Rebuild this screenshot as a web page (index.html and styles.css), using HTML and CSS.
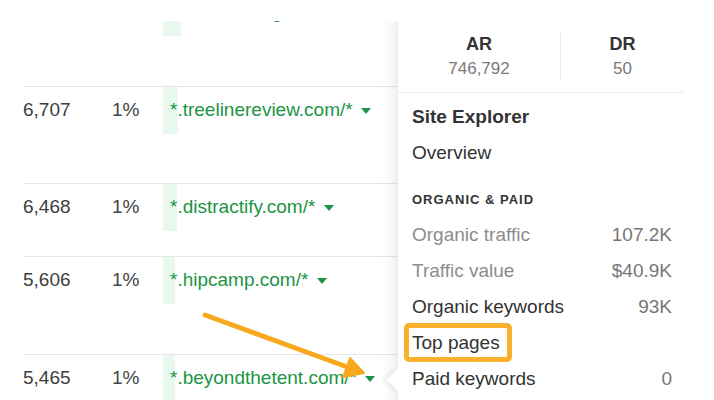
FILE: index.html
```html
<!DOCTYPE html>
<html lang="en">
<head>
  <meta charset="UTF-8" />
  <title>Competing domains</title>
  <link rel="stylesheet" href="styles.css">
</head>
<body>
  <div class="frame">
    <!-- Lignes du tableau des domaines -->
    <div class="rows">
      <div class="row row-a">
        <div class="cell num">7,146</div>
        <div class="cell pct">1%</div>
        <div class="cell link"><span class="bar" style="width:18px"></span>*.adventuring.com/* <i class="caret"></i></div>
      </div>
      <div class="row row-b">
        <div class="cell num">6,707</div>
        <div class="cell pct">1%</div>
        <div class="cell link"><span class="bar" style="width:15px"></span>*.treelinereview.com/* <i class="caret"></i></div>
      </div>
      <div class="row row-c">
        <div class="cell num">6,468</div>
        <div class="cell pct">1%</div>
        <div class="cell link"><span class="bar" style="width:14px"></span>*.distractify.com/* <i class="caret"></i></div>
      </div>
      <div class="row row-d">
        <div class="cell num">5,606</div>
        <div class="cell pct">1%</div>
        <div class="cell link"><span class="bar" style="width:12px"></span>*.hipcamp.com/* <i class="caret"></i></div>
      </div>
      <div class="row row-e">
        <div class="cell num">5,465</div>
        <div class="cell pct">1%</div>
        <div class="cell link"><span class="bar" style="width:12px"></span>*.beyondthetent.com/* <i class="caret"></i></div>
      </div>
    </div>

    <!-- Menu déroulant du domaine -->
    <div class="popup">
      <div class="popup-head">
        <div class="stat stat-left">
          <div class="stat-name">AR</div>
          <div class="stat-value">746,792</div>
        </div>
        <div class="stat">
          <div class="stat-name">DR</div>
          <div class="stat-value">50</div>
        </div>
      </div>
      <div class="popup-body">
        <div class="item item-title">Site Explorer</div>
        <div class="item">Overview</div>
        <div class="section">Organic &amp; paid</div>
        <div class="item item-muted"><span>Organic traffic</span><span class="val">107.2K</span></div>
        <div class="item item-muted"><span>Traffic value</span><span class="val">$40.9K</span></div>
        <div class="item"><span>Organic keywords</span><span class="val">93K</span></div>
        <div class="item"><span class="marked">Top pages</span></div>
        <div class="item"><span>Paid keywords</span><span class="val">0</span></div>
      </div>
    </div>

    <!-- Flèche orange d'annotation -->
    <svg class="arrow" width="190" height="100" viewBox="190 279 190 100">
      <line x1="205" y1="294" x2="350" y2="347" stroke="#f9a91e" stroke-width="5" stroke-linecap="round"/>
      <polygon points="350,337 364,352 343,356" fill="#f9a91e" stroke="#f9a91e" stroke-width="2" stroke-linejoin="round"/>
    </svg>
  </div>
</body>
</html>
```

FILE: styles.css
```css
/* Police proche de Helvetica pour tout */
body {
  margin: 0;
  background: #fff;
  font-family: "Liberation Sans", Arial, sans-serif;
  font-size: 19px;
  color: #3a3a3a;
}

/* La capture est coupée en haut : on cache les 21 premiers pixels */
.frame {
  position: relative;
  margin-top: 21px;
  height: 379px;
  overflow: hidden;
}

.rows {
  margin-top: -32px;
  margin-left: 23px;
}

.row {
  display: flex;
  border-bottom: 1px solid #e6e6e6;
  box-sizing: border-box;
  line-height: 22px;
}

.row-a { height: 98px; }
.row-b { height: 97px; }
.row-c { height: 73px; }
.row-d { height: 98px; }
.row-e { height: 60px; border-bottom: none; }

.cell {
  padding-top: 12px;
}

.num {
  width: 89px;
  color: #3d3d3d;
}

.pct {
  width: 51px;
  color: #444;
}

/* Lien vert du domaine avec sa petite barre de fond */
.link {
  position: relative;
  padding-left: 7px;
  color: #1b9445;
  white-space: nowrap;
}

.bar {
  position: absolute;
  left: 0;
  top: 0;
  height: 47px;
  background: #e7f8ee;
  z-index: -1;
}

.caret {
  display: inline-block;
  width: 0;
  height: 0;
  margin-left: 3px;
  border-left: 5px solid transparent;
  border-right: 5px solid transparent;
  border-top: 6px solid #1b9445;
  vertical-align: 2px;
}

/* Le menu qui s'ouvre par-dessus le tableau (il continue hors de l'image à droite) */
.popup {
  position: absolute;
  left: 398px;
  top: -10px;
  width: 360px;
  height: 420px;
  background: #fff;
  box-shadow: 0 0 16px rgba(0, 0, 0, 0.13);
}

.popup::before {
  content: "";
  position: absolute;
  left: -8px;
  top: 360px;
  width: 17px;
  height: 17px;
  background: #fff;
  transform: rotate(45deg);
  box-shadow: -3px 3px 5px rgba(0, 0, 0, 0.07);
}

.popup-head {
  display: flex;
  width: 286px;
  padding: 21px 0 11px;
  border-bottom: 1px solid #ebebeb;
  text-align: center;
}

.stat {
  flex: 1;
}

.stat-left {
  flex: 0 0 162px;
  border-right: 1px solid #e8e8e8;
}

.stat-name {
  font-size: 18px;
  font-weight: bold;
  line-height: 24px;
  color: #333;
}

.stat-value {
  font-size: 17px;
  line-height: 25px;
  color: #7a7a7a;
}

.popup-body {
  position: relative;
  width: 286px;
  box-sizing: border-box;
  padding: 6px 12px 0 14px;
}

.item {
  display: flex;
  justify-content: space-between;
  line-height: 36px;
  color: #333;
}

.item-title {
  font-weight: bold;
}

.item-muted {
  color: #8c8c8c;
}

.val {
  color: #777;
}

.section {
  margin: 19px 0 7px;
  font-size: 13px;
  font-weight: bold;
  line-height: 20px;
  letter-spacing: 1px;
  text-transform: uppercase;
  color: #333;
}

/* Cadre orange autour de "Top pages" */
.marked {
  position: relative;
}

.marked::after {
  content: "";
  position: absolute;
  left: -8px;
  right: -12px;
  top: -2px;
  bottom: -1px;
  border: 5px solid #f9b02a;
  border-radius: 5px;
}

.arrow {
  position: absolute;
  left: 190px;
  top: 279px;
}
```
